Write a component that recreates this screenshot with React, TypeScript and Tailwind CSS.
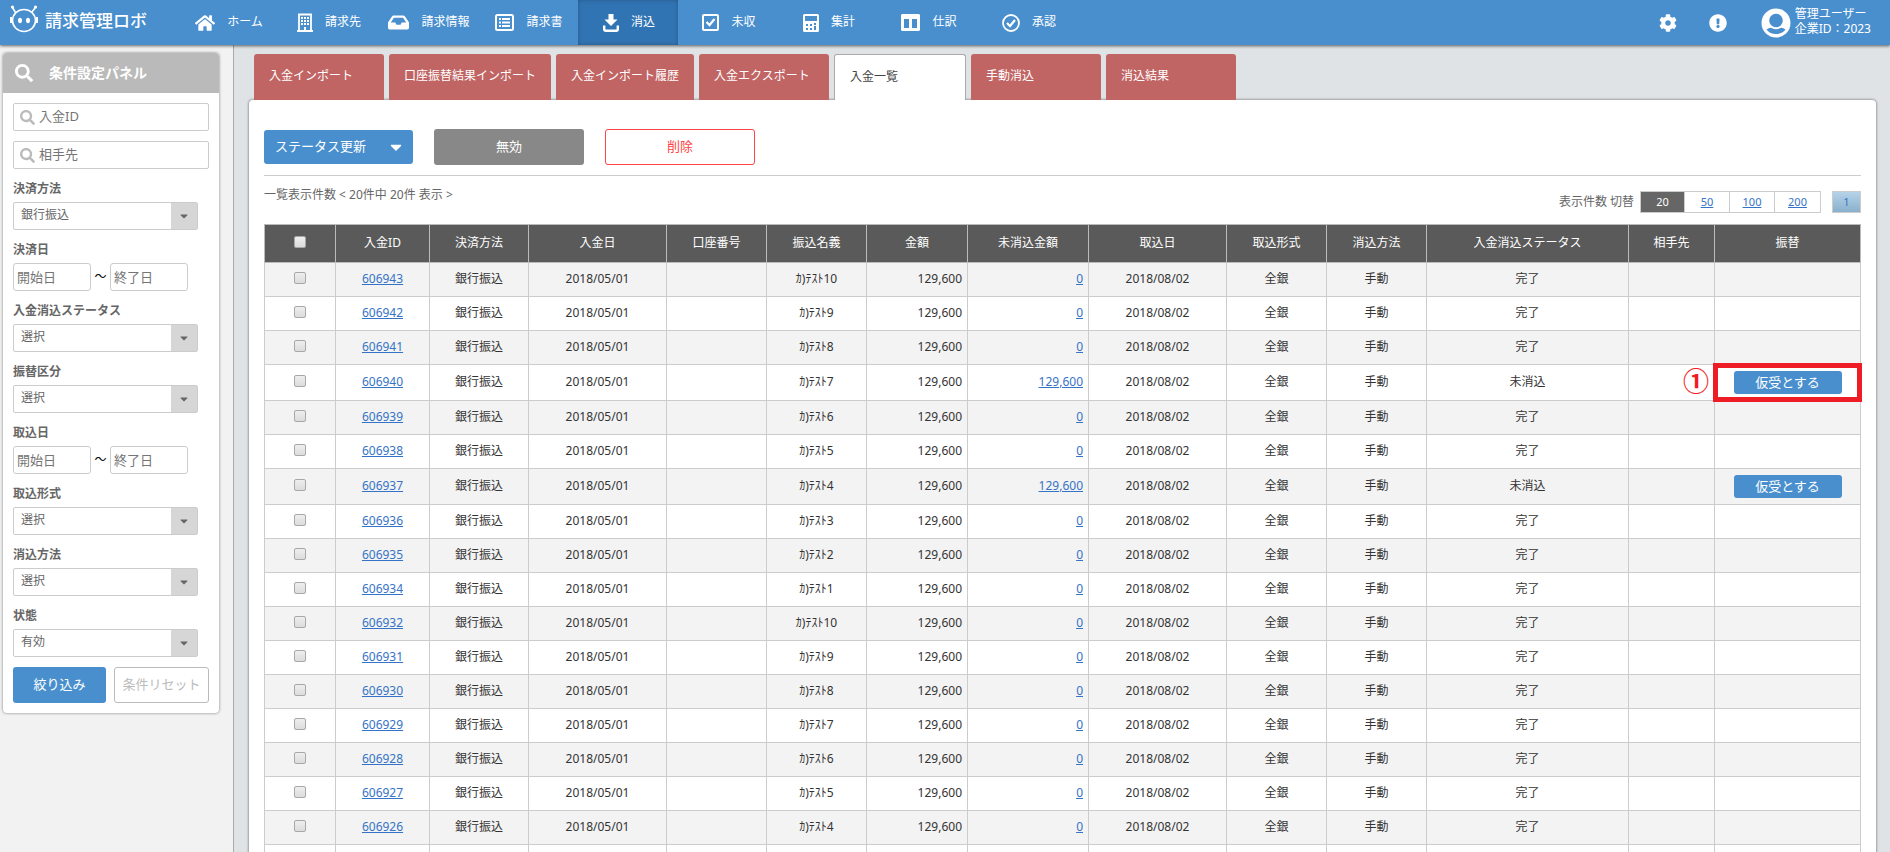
import type { ReactNode } from 'react';
import { FaCaretDown, FaCog, FaExclamationCircle, FaHome, FaInbox, FaSearch } from 'react-icons/fa';

interface Payment {
  id: number;
  name: string;
  pending?: boolean;
}

interface Filter {
  label: string;
  value?: string;
}

const payments: Payment[] = [
  { id: 606943, name: 'ｶ)ﾃｽﾄ10' },
  { id: 606942, name: 'ｶ)ﾃｽﾄ9' },
  { id: 606941, name: 'ｶ)ﾃｽﾄ8' },
  { id: 606940, name: 'ｶ)ﾃｽﾄ7', pending: true },
  { id: 606939, name: 'ｶ)ﾃｽﾄ6' },
  { id: 606938, name: 'ｶ)ﾃｽﾄ5' },
  { id: 606937, name: 'ｶ)ﾃｽﾄ4', pending: true },
  { id: 606936, name: 'ｶ)ﾃｽﾄ3' },
  { id: 606935, name: 'ｶ)ﾃｽﾄ2' },
  { id: 606934, name: 'ｶ)ﾃｽﾄ1' },
  { id: 606932, name: 'ｶ)ﾃｽﾄ10' },
  { id: 606931, name: 'ｶ)ﾃｽﾄ9' },
  { id: 606930, name: 'ｶ)ﾃｽﾄ8' },
  { id: 606929, name: 'ｶ)ﾃｽﾄ7' },
  { id: 606928, name: 'ｶ)ﾃｽﾄ6' },
  { id: 606927, name: 'ｶ)ﾃｽﾄ5' },
  { id: 606926, name: 'ｶ)ﾃｽﾄ4' },
  { id: 606925, name: 'ｶ)ﾃｽﾄ3' },
  { id: 606924, name: 'ｶ)ﾃｽﾄ2' },
  { id: 606923, name: 'ｶ)ﾃｽﾄ1' },
];

// id of the row that carries the step 1 marker
const MARKED_ID = 606940;

const tabs = [
  '入金インポート',
  '口座振替結果インポート',
  '入金インポート履歴',
  '入金エクスポート',
  '入金一覧',
  '手動消込',
  '消込結果',
];

// filters without a value are date ranges
const filters: Filter[] = [
  { label: '決済方法', value: '銀行振込' },
  { label: '決済日' },
  { label: '入金消込ステータス', value: '選択' },
  { label: '振替区分', value: '選択' },
  { label: '取込日' },
  { label: '取込形式', value: '選択' },
  { label: '消込方法', value: '選択' },
  { label: '状態', value: '有効' },
];

const columns = [
  { title: '入金ID', width: 'w-[94px]' },
  { title: '決済方法', width: 'w-[99px]' },
  { title: '入金日', width: 'w-[138px]' },
  { title: '口座番号', width: 'w-[100px]' },
  { title: '振込名義', width: 'w-[100px]' },
  { title: '金額', width: 'w-[101px]' },
  { title: '未消込金額', width: 'w-[121px]' },
  { title: '取込日', width: 'w-[138px]' },
  { title: '取込形式', width: 'w-[100px]' },
  { title: '消込方法', width: 'w-[100px]' },
  { title: '入金消込ステータス', width: 'w-[202px]' },
  { title: '相手先', width: 'w-[86px]' },
  { title: '振替', width: 'w-[146px]' },
];

function BuildingIcon() {
  return (
    <svg width="16" height="19" viewBox="0 0 16 19" fill="none">
      <path d="M2 18V1.5h12V18" stroke="currentColor" strokeWidth="1.8" />
      <path d="M0 18h16" stroke="currentColor" strokeWidth="2" />
      <path d="M4 4h2v2H4zM7 4h2v2H7zM10 4h2v2h-2zM4 7h2v2H4zM7 7h2v2H7zM10 7h2v2h-2zM4 10h2v2H4zM7 10h2v2H7zM10 10h2v2h-2zM7 14h2v4H7z" fill="currentColor" />
    </svg>
  );
}

function ListIcon() {
  return (
    <svg width="19" height="17" viewBox="0 0 19 17" fill="none" stroke="currentColor">
      <rect x="1" y="1" width="17" height="15" rx="1.5" strokeWidth="2" />
      <path d="M4 5h2M4 8.5h2M4 12h2M7 5h8M7 8.5h8M7 12h8" strokeWidth="2" />
    </svg>
  );
}

function DownloadIcon() {
  return (
    <svg width="16" height="18" viewBox="0 0 16 18" fill="none">
      <path d="M5.5 0h5v5.500h4L8 12 1.500 5.500h4z" fill="currentColor" />
      <path d="M1.200 11.500v3.500q0 1.700 1.700 1.700h10.200q1.700 0 1.700-1.700v-3.500" stroke="currentColor" strokeWidth="2.400" />
    </svg>
  );
}

function CheckBoxIcon() {
  return (
    <svg width="17" height="17" viewBox="0 0 17 17" fill="none" stroke="currentColor">
      <rect x="1" y="1" width="15" height="15" rx="1" strokeWidth="2" />
      <path d="M4.5 8l3 3 5-6" strokeWidth="2.2" />
    </svg>
  );
}

function CalculatorIcon() {
  return (
    <svg width="16" height="18" viewBox="0 0 16 18" fill="currentColor">
      <path fillRule="evenodd" d="M1.5 0h13Q16 0 16 1.500v15q0 1.500-1.500 1.500h-13Q0 18 0 16.500v-15Q0 0 1.500 0zM2 2v5h12V2zM3 10v2h2v-2zM7 10v2h2v-2zM11 9v2h2V9zM3 14v2h2v-2zM7 14v2h2v-2zM11 12v4h2v-4z" />
    </svg>
  );
}

function ColumnsIcon() {
  return (
    <svg width="19" height="17" viewBox="0 0 19 17" fill="currentColor">
      <path fillRule="evenodd" d="M1 0h17l1 1v15l-1 1H1l-1-1V1zM3 5v9h5V5zM11 5v9h5V5z" />
    </svg>
  );
}

function CheckCircleIcon() {
  return (
    <svg width="18" height="18" viewBox="0 0 18 18" fill="none" stroke="currentColor">
      <circle cx="9" cy="9" r="8" strokeWidth="1.800" />
      <path d="M5 9l3 3 5-6" strokeWidth="2.200" />
    </svg>
  );
}

function RobotLogo() {
  return (
    <svg width="30" height="28" viewBox="0 0 30 28" fill="none" stroke="currentColor" strokeWidth="1.600">
      <path d="M6.500 7.500L3.500 2.500M22.500 7.500l4-5" />
      <circle cx="3.500" cy="2" r="1.600" fill="currentColor" stroke="none" />
      <circle cx="26.500" cy="2" r="1.600" fill="currentColor" stroke="none" />
      <ellipse cx="15" cy="15.500" rx="11.500" ry="11" />
      <path d="M2 12v6M28 12v6" strokeWidth="2" />
      <ellipse cx="11" cy="15.500" rx="2" ry="2.800" fill="currentColor" stroke="none" />
      <ellipse cx="19" cy="15.500" rx="2" ry="2.800" fill="currentColor" stroke="none" />
    </svg>
  );
}

function UserIcon() {
  return (
    <svg width="30" height="30" viewBox="0 0 30 30">
      <circle cx="15" cy="15" r="14.500" fill="#fff" />
      <circle cx="15" cy="12.500" r="6.800" fill="#498fce" />
      <path d="M5.500 21.500q3.500-2.500 5-1.500 4.500 2.500 9 0 1.500-1 5 1.500-3.500 4.500-9.500 4.500t-9.500-4.500z" fill="#498fce" />
    </svg>
  );
}

const navItems: { label: string; icon: ReactNode; active?: boolean }[] = [
  { label: 'ホーム', icon: <FaHome size={20} /> },
  { label: '請求先', icon: <BuildingIcon /> },
  { label: '請求情報', icon: <FaInbox size={21} /> },
  { label: '請求書', icon: <ListIcon /> },
  { label: '消込', icon: <DownloadIcon />, active: true },
  { label: '未収', icon: <CheckBoxIcon /> },
  { label: '集計', icon: <CalculatorIcon /> },
  { label: '仕訳', icon: <ColumnsIcon /> },
  { label: '承認', icon: <CheckCircleIcon /> },
];

function Header() {
  return (
    <header className="relative z-10 flex h-[45px] shrink-0 items-stretch bg-[#498fce] text-white shadow-[0_1px_3px_rgba(0,0,0,0.6)]">
      <a href="#" className="flex w-[178px] shrink-0 items-center gap-[6px] pb-2 pl-[9px]">
        <RobotLogo />
        <span className="pt-1 text-[17px] leading-5 font-medium whitespace-nowrap">請求管理ロボ</span>
      </a>
      <nav className="flex">
        {navItems.map((item) => (
          <a
            key={item.label}
            href="#"
            className={`flex w-[100px] items-center justify-center gap-3 pl-[2px] whitespace-nowrap ${item.active ? 'bg-[#3174b3] shadow-[inset_0_0_4px_rgba(0,0,0,0.25)]' : ''}`}
          >
            {item.icon}
            <span className="pb-[2px]">{item.label}</span>
          </a>
        ))}
      </nav>
      <div className="ml-auto flex items-center pr-[19px]">
        <button type="button" aria-label="設定" className="mr-8">
          <FaCog size={18} />
        </button>
        <button type="button" aria-label="お知らせ" className="mr-[34px]">
          <FaExclamationCircle size={18} />
        </button>
        <a href="#" className="flex items-center gap-1 leading-[15px]">
          <UserIcon />
          <span className="pb-1">
            管理ユーザー
            <br />
            企業ID：2023
          </span>
        </a>
      </div>
    </header>
  );
}

function SearchInput({ placeholder }: { placeholder: string }) {
  return (
    <label className="mb-[10px] flex h-7 items-center gap-1 rounded-[2px] border border-[#ccc] px-[6px]">
      <FaSearch size={15} className="shrink-0 text-[#bbb]" />
      <input type="text" aria-label={placeholder} placeholder={placeholder} className="w-full min-w-0 text-[13px] outline-none placeholder:text-[#757575]" />
    </label>
  );
}

function FilterField({ filter }: { filter: Filter }) {
  if (!filter.value) {
    return (
      <fieldset className="mb-[10px]">
        <legend className="h-[23px] leading-5 font-bold">{filter.label}</legend>
        <div className="flex h-7 items-center">
          <input type="text" aria-label={`${filter.label} 開始日`} placeholder="開始日" className="h-7 w-[78px] rounded-[3px] border border-[#ccc] px-[3px] text-[13px] placeholder:text-[#757575]" />
          <span className="w-[19px] text-center text-black">～</span>
          <input type="text" aria-label={`${filter.label} 終了日`} placeholder="終了日" className="h-7 w-[78px] rounded-[3px] border border-[#ccc] px-[3px] text-[13px] placeholder:text-[#757575]" />
        </div>
      </fieldset>
    );
  }

  return (
    <label className="mb-[10px] block">
      <span className="block h-[23px] leading-5 font-bold">{filter.label}</span>
      <span className="relative block w-[185px]">
        <select className="block h-7 w-full appearance-none rounded-[2px] border border-[#ccc] bg-white pb-[3px] pl-[7px]">
          <option>{filter.value}</option>
        </select>
        <span className="pointer-events-none absolute inset-y-px right-px flex w-[26px] items-center justify-center bg-[#d6d6d6]">
          <FaCaretDown size={12} />
        </span>
      </span>
    </label>
  );
}

function FilterPanel() {
  return (
    <aside className="w-[234px] shrink-0 border-r border-[#aaa] bg-[#f2f2f2] pt-2 pl-[3px]">
      <form className="w-[216px] overflow-hidden rounded-[4px] bg-white text-[#666] shadow-[0_0_3px_rgba(0,0,0,0.5)]">
        <h2 className="flex h-10 items-center gap-4 bg-[#bababa] pl-3 text-sm font-bold text-white">
          <FaSearch size={18} />
          条件設定パネル
        </h2>
        <div className="p-[10px]">
          <SearchInput placeholder="入金ID" />
          <SearchInput placeholder="相手先" />
          {filters.map((filter) => (
            <FilterField key={filter.label} filter={filter} />
          ))}
          <div className="flex gap-2">
            <button type="button" className="h-9 flex-1 rounded-[3px] bg-[#498fce] text-[13px] text-white">絞り込み</button>
            <button type="button" className="h-9 flex-1 rounded-[3px] border border-[#bbb] text-[13px] whitespace-nowrap text-[#bbb]">条件リセット</button>
          </div>
        </div>
      </form>
    </aside>
  );
}

function Pager() {
  return (
    <div className="mt-[6px] flex h-[22px] items-center">
      <span className="mr-[6px]">表示件数 切替</span>
      <div className="flex h-full divide-x divide-[#ccc] border border-[#ccc] text-[11px]">
        <span className="flex w-11 items-center justify-center bg-[#666] text-white">20</span>
        {[50, 100, 200].map((size) => (
          <a key={size} href="#" className="flex w-[45px] items-center justify-center text-[#3573c6] underline">{size}</a>
        ))}
      </div>
      <a href="#" className="ml-[11px] flex h-full w-[29px] items-center justify-center border border-[#ccc] bg-linear-to-b from-[#b5d3e8] to-[#8ab0cd] text-[11px] text-[#3573c6]">1</a>
    </div>
  );
}

function CheckBox({ label }: { label: string }) {
  return (
    <input
      type="checkbox"
      aria-label={label}
      className="mx-auto block size-3 appearance-none rounded-[2px] border border-[#a8a8a8] bg-linear-to-b from-[#eee] to-[#dcdcdc]"
    />
  );
}

function PaymentTable() {
  return (
    <table className="w-full table-fixed border-collapse text-center whitespace-nowrap text-[#333]">
      <thead>
        <tr className="h-[38px] bg-[#5a5a5a] text-white">
          <th scope="col" className="w-[71px] border border-[#bbb] pb-[3px]">
            <CheckBox label="すべて選択" />
          </th>
          {columns.map((column) => (
            <th key={column.title} scope="col" className={`border border-[#bbb] pb-[2px] font-normal ${column.width}`}>{column.title}</th>
          ))}
        </tr>
      </thead>
      <tbody>
        {payments.map((payment) => (
          <tr key={payment.id} className={`odd:bg-[#f3f3f3] ${payment.pending ? 'h-9' : 'h-[34px]'}`}>
            <td className="border border-[#ccc] pb-[3px]">
              <CheckBox label={`${payment.id}`} />
            </td>
            <td className="border border-[#ccc] pb-[2px]">
              <a href="#" className="text-[#3573c6] underline">{payment.id}</a>
            </td>
            <td className="border border-[#ccc] pb-[2px]">銀行振込</td>
            <td className="border border-[#ccc] pb-[2px]">2018/05/01</td>
            <td className="border border-[#ccc]"></td>
            <td className="border border-[#ccc] pb-[2px]">{payment.name}</td>
            <td className="border border-[#ccc] pr-[5px] pb-[2px] text-right">129,600</td>
            <td className="border border-[#ccc] pr-[5px] pb-[2px] text-right">
              <a href="#" className="text-[#3573c6] underline">{payment.pending ? '129,600' : '0'}</a>
            </td>
            <td className="border border-[#ccc] pb-[2px]">2018/08/02</td>
            <td className="border border-[#ccc] pb-[2px]">全銀</td>
            <td className="border border-[#ccc] pb-[2px]">手動</td>
            <td className="border border-[#ccc] pb-[2px]">{payment.pending ? '未消込' : '完了'}</td>
            <td className="border border-[#ccc]"></td>
            <td className="relative border border-[#ccc]">
              {payment.pending && (
                <button type="button" className="h-[23px] w-[108px] rounded-[3px] bg-[#498fce] align-middle text-[13px] text-white">仮受とする</button>
              )}
              {payment.id === MARKED_ID && (
                <>
                  <span className="pointer-events-none absolute -inset-[2px] border-[5px] border-[#ee1c25]" />
                  <span className="absolute top-1/2 right-full mr-[6px] -translate-y-1/2 pb-1 text-[26px] leading-none font-bold text-[#ee1c25]">①</span>
                </>
              )}
            </td>
          </tr>
        ))}
      </tbody>
    </table>
  );
}

export default function App() {
  return (
    <div className="flex h-screen flex-col bg-[#dfe3e6] font-['Noto_Sans','Noto_Sans_CJK_JP',sans-serif] text-xs">
      <Header />
      <div className="flex min-h-0 flex-1 overflow-y-auto [scrollbar-width:none]">
        <div className="flex h-max min-h-full w-full">
          <FilterPanel />
          <main className="min-w-0 flex-1 pt-[9px] pr-[14px] pl-[15px]">
            <div className="flex gap-[5px] pl-[5px]">
              {tabs.map((tab) => (
                <a
                  key={tab}
                  href="#"
                  className={`flex h-[46px] items-center rounded-t-[3px] px-[15px] pb-[2px] whitespace-nowrap ${tab === '入金一覧' ? 'relative z-10 min-w-[132px] border border-b-0 border-[#aaa] bg-white text-[#444]' : 'min-w-[130px] bg-[#c06464] text-white'}`}
                >
                  {tab}
                </a>
              ))}
            </div>
            <section className="rounded-[4px] bg-white px-[15px] pt-[29px] pb-5 text-[#666] shadow-[0_0_3px_rgba(0,0,0,0.6)]">
              <div className="flex items-center gap-[21px] border-b border-[#ccc] pb-[10px]">
                <button type="button" className="flex h-[34px] w-[149px] items-center justify-between rounded-[3px] bg-[#498fce] pr-2 pl-[11px] text-[13px] text-white">
                  ステータス更新
                  <FaCaretDown size={18} />
                </button>
                <button type="button" className="h-9 w-[150px] rounded-[3px] bg-[#888] text-[13px] text-white">無効</button>
                <button type="button" className="h-9 w-[150px] rounded-[3px] border border-[#f44] text-[13px] text-[#f44]">削除</button>
              </div>
              <div className="mt-[9px] mb-[11px] flex items-start justify-between">
                <p className="leading-5">一覧表示件数 &lt; 20件中 20件 表示 &gt;</p>
                <Pager />
              </div>
              <PaymentTable />
            </section>
          </main>
        </div>
      </div>
    </div>
  );
}
